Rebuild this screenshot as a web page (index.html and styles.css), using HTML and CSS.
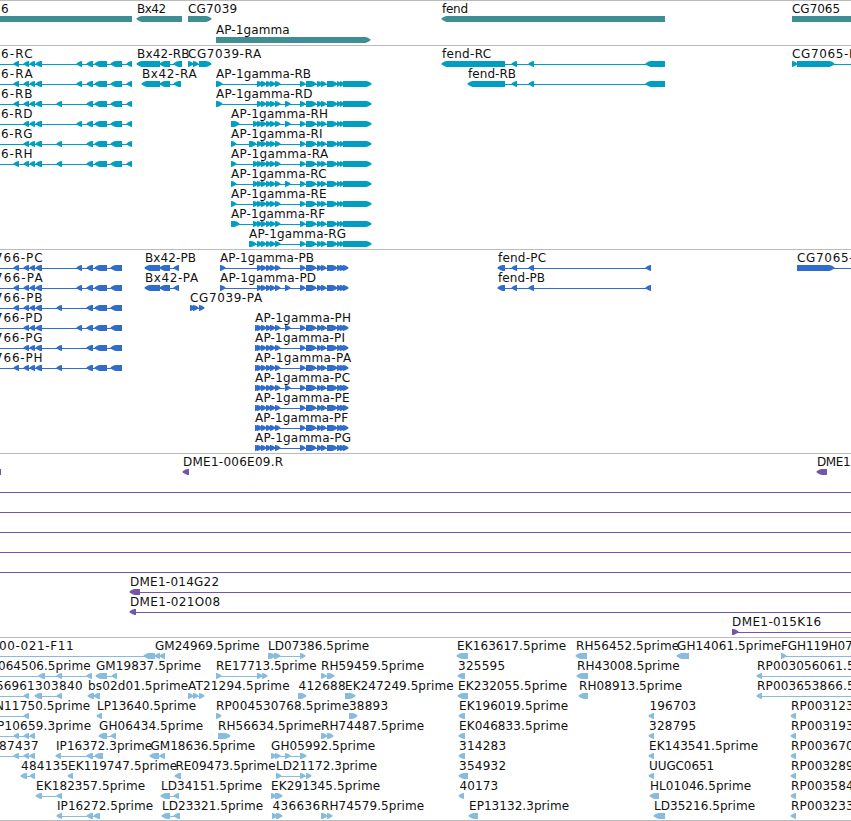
FILE: index.html
```
<!DOCTYPE html>
<html lang="en">

<head>
  <meta charset="UTF-8">
  <meta name="viewport" content="width=device-width, initial-scale=1.0">
  <title>Genome Browser</title>
  <link rel="stylesheet" href="styles.css">
</head>

<body>
  <main class="browser">
    <!-- Genes -->
    <section class="track genes"><svg id="genes"></svg></section>

    <!-- Transcripts -->
    <section class="track transcripts"><svg id="transcripts"></svg></section>

    <!-- Coding sequences -->
    <section class="track proteins"><svg id="proteins"></svg></section>

    <!-- Clones -->
    <section class="track clones"><svg id="clones"></svg></section>

    <!-- ESTs -->
    <section class="track ests"><svg id="ests"></svg></section>
  </main>

  <script src="script.js"></script>
</body>

</html>
```
FILE: styles.css
```
/* Reset and base styles */
body {
  margin: 0;
  background: #fff;
  color: #000;
  font-family: "DejaVu Sans", sans-serif;
  font-size: 12px;
  overflow: hidden;
}

.browser {
  display: flex;
  flex-direction: column;
  border-bottom: 1px solid #bbb;
}

/* Tracks */
.track {
  box-sizing: border-box;
  border-top: 1px solid #bbb;
}

.track svg {
  display: block;
  width: 100%;
  height: 100%;
  overflow: hidden;
}

.track text {
  fill: #111;
}

.genes {
  height: 45px;
  color: #408e95;
}

.transcripts {
  height: 204px;
  color: #009fc1;
}

.proteins {
  height: 204px;
  color: #306ccc;
}

.clones {
  height: 184px;
  color: #7356a8;
}

.ests {
  height: 183px;
  color: #87bcde;
}

/* Features */
.span,
.intron {
  fill: currentColor;
}

.intron {
  shape-rendering: crispEdges;
}
```
FILE: script.js
```
const SVG = 'http://www.w3.org/2000/svg';
const HEAD = 5;

function add(parent, tag, attrs) {
  const el = document.createElementNS(SVG, tag);
  for (const key in attrs) el.setAttribute(key, attrs[key]);
  parent.appendChild(el);
  return el;
}

// Block with a blunt arrow head on the side of the strand
function drawSpan(svg, y, from, to, strand) {
  const tip = (strand < 0 ? from : to) + strand * 0.4;
  const back = strand < 0 ? to : from;
  const neck = tip - strand * Math.min(HEAD, to - from);
  const mid = tip - strand * 3;
  const points = [[tip, y + 2.2], [mid, y + 0.6], [neck, y], [back, y],
    [back, y + 6], [neck, y + 6], [mid, y + 5.2], [tip, y + 3.6]];
  add(svg, 'polygon', { class: 'span', points: points.join(' ') });
}

// Feature: [row, strand, label, label start, label end, line start, line end, spans]
function drawTrack(id, features, pitch = 20) {
  const svg = document.getElementById(id);
  features.forEach(([row, strand, label, start, end, from, to, spans]) => {
    const y = row * pitch;
    if (to > from) add(svg, 'rect', { class: 'intron', x: from, y: y + 18, width: to - from, height: 1 });
    spans.forEach(([a, b]) => drawSpan(svg, y + 15, a, b, strand));
    if (label) {
      const text = add(svg, 'text', { x: start, y: y + 12, textLength: end - start + 0.6 });
      text.textContent = label;
    }
  });
}

// Exons shared by several transcripts
const LEFT = [[24, 29], [30, 35], [36, 42]];
const LEFT_END = [[87, 93], [95, 107], [111, 122]];
const BX = [[160, 170]];
const AP_FIVE = [[257, 262], [261, 266], [266, 271], [270, 275], [275, 280]];
const AP_MID = [[300, 305], [306, 316], [317, 322], [321, 326], [327, 337]];
const AP_RNA = [...AP_MID, [337, 341], [340, 344], [343, 371]];
const AP_CDS = [...AP_MID, [337, 342], [340, 345], [343, 348]];
const FEND = [[512, 517], [529, 534]];
const A = [14, 19], B = [57, 62], C = [77, 82], D = [285, 290];

drawTrack('genes', [
  [0, -1, '6', 1, 8, 0, 0, [[-10, 132]]],
  [0, -1, 'Bx42', 137, 165.5, 0, 0, [[137, 182]]],
  [0, 1, 'CG7039', 188, 236.5, 0, 0, [[188, 211]]],
  [1, 1, 'AP-1gamma', 216, 289, 0, 0, [[216, 370]]],
  [0, -1, 'fend', 442, 467.5, 0, 0, [[442, 665]]],
  [0, 1, 'CG7065', 792, 839.5, 0, 0, [[792, 870]]]
], 21);

const transcripts = [
  [0, -1, 'Bx42-RB', 137, 189, 137, 182, [[137, 160], ...BX, [174, 182]]],
  [1, -1, 'Bx42-RA', 142, 196, 142, 181, [[142, 160], ...BX, [174, 181]]],
  [0, 1, 'CG7039-RA', 188, 260.5, 188, 211, [[188, 193], [193, 198], [199, 211]]],
  [0, -1, 'fend-RC', 442, 490.5, 505, 665, [[442, 505], ...FEND, [646, 665]]],
  [1, -1, 'fend-RB', 468, 515.5, 505, 665, [[468, 505], ...FEND, [646, 665]]],
  [0, 1, 'CG7065-RA', 792, 865, 792, 851, [[792, 797], [797, 834]]]
];

[
  ['C', A, C], ['A', A, C], ['B', A, B], ['D', C], ['G', B], ['H', A, B]
].forEach(([name, ...extra], row) => {
  transcripts.push([row, -1, '6-R' + name, 1, 32, 0, 132, [...LEFT, ...extra, ...LEFT_END, [127, 132]]]);
});

[
  ['B', 216, 310.5, [216, 222]],
  ['D', 216, 312, [216, 222], D],
  ['H', 231, 327.5, [231, 239], [253, 258], D],
  ['I', 231, 322, [231, 236], [249, 256]],
  ['A', 231, 327.5, [231, 236], [253, 258]],
  ['C', 231, 326, [231, 236], [253, 258], D],
  ['E', 231, 326, [231, 236], [253, 258]],
  ['F', 231, 324.5, [231, 239], [253, 258]],
  ['G', 249, 345.5, [249, 256]]
].forEach(([name, x, end, ...extra], i) => {
  transcripts.push([i + 1, 1, 'AP-1gamma-R' + name, x, end, x, 371, [...extra, ...AP_FIVE, ...AP_RNA]]);
});

drawTrack('transcripts', transcripts);

const proteins = [
  [0, -1, 'Bx42-PB', 145, 195.5, 145, 179, [[145, 160], ...BX, [174, 179]]],
  [1, -1, 'Bx42-PA', 145, 197.5, 145, 179, [[145, 160], ...BX, [174, 179]]],
  [2, 1, 'CG7039-PA', 190, 261.5, 190, 204, [[190, 195], [193, 198], [199, 204]]],
  [0, -1, 'fend-PC', 498, 545.5, 498, 651, [[498, 505], ...FEND, [646, 651]]],
  [1, -1, 'fend-PB', 498, 544.5, 498, 651, [[498, 505], ...FEND, [646, 651]]],
  [0, 1, 'CG7065-PA', 797, 869, 797, 851, [[797, 834]]]
];

[
  ['C', A, C], ['A', A, C], ['B', A, B], ['D', C], ['G', B], ['H', A, B]
].forEach(([name, ...extra], row) => {
  proteins.push([row, -1, '766-P' + name, -5, 42, 0, 122, [...LEFT, ...extra, ...LEFT_END]]);
});

[
  [0, 'B', 220, 313.5, [220, 225]],
  [1, 'D', 220, 315.5, [220, 225], D],
  [3, 'H', 255, 350.5, [255, 260], D],
  [4, 'I', 255, 344.5, [255, 260]],
  [5, 'A', 255, 350.5, [255, 260]],
  [6, 'C', 255, 349.5, [255, 260], D],
  [7, 'E', 255, 349, [255, 260]],
  [8, 'F', 255, 347.5, [255, 260]],
  [9, 'G', 255, 350.5, [255, 260]]
].forEach(([row, name, x, end, ...extra]) => {
  proteins.push([row, 1, 'AP-1gamma-P' + name, x, end, x, 348, [...extra, ...AP_FIVE, ...AP_CDS]]);
});

drawTrack('proteins', proteins);

drawTrack('clones', [
  [0, -1, '', 0, 0, 0, 0, [[-8, 1]]],
  [0, -1, 'DME1-006E09.R', 183, 282.5, 0, 0, [[183, 189]]],
  [0, -1, 'DME1', 817, 850, 0, 0, [[817, 827]]],
  [1, 1, '', 0, 0, 0, 851, []],
  [2, 1, '', 0, 0, 0, 851, []],
  [3, 1, '', 0, 0, 0, 851, []],
  [4, 1, '', 0, 0, 0, 851, []],
  [5, 1, '', 0, 0, 0, 851, []],
  [6, -1, 'DME1-014G22', 130, 218.5, 130, 851, [[130, 140]]],
  [7, -1, 'DME1-021O08', 130, 219.5, 130, 851, [[130, 136]]],
  [8, 1, 'DME1-015K16', 732, 820.5, 732, 851, [[732, 738]]]
]);

drawTrack('ests', [
  [0, -1, '00-021-F11', -1, 73, 0, 165, [[144, 155], [155, 160], [160, 165]]],
  [0, -1, 'GM24969.5prime', 155, 259, 155, 165, []],
  [0, 1, 'LD07386.5prime', 268, 368.5, 268, 305, [[268, 275], [274, 280], [300, 305]]],
  [0, -1, 'EK163617.5prime', 457, 565.5, 0, 0, [[457, 468]]],
  [0, -1, 'RH56452.5prime', 576, 678.5, 0, 0, [[576, 587]]],
  [0, -1, 'GH14061.5prime', 677, 780.5, 0, 0, [[677, 689]]],
  [0, 1, 'FGH119H07', 781, 852, 781, 851, [[781, 786]]],

  [1, -1, '064506.5prime', -2, 90, 0, 92, [[39, 45], [57, 62], [87, 92]]],
  [1, -1, 'GM19837.5prime', 96, 200.5, 96, 117, [[96, 107], [112, 117]]],
  [1, 1, 'RE17713.5prime', 216, 316, 216, 267, [[216, 221], [257, 262], [262, 267]]],
  [1, 1, 'RH59459.5prime', 321, 423.5, 321, 334, [[321, 326], [327, 334]]],
  [1, -1, '325595', 458, 504.5, 0, 0, [[458, 465]]],
  [1, -1, 'RH43008.5prime', 577, 679, 0, 0, [[577, 588]]],
  [1, -1, 'RP003056061.5', 757, 854, 757, 851, [[757, 762]]],

  [2, -1, '56961', -4, 34, 0, 29, [[24, 29]]],
  [2, -1, '303840', 35, 82, 35, 62, [[35, 42], [57, 62]]],
  [2, -1, 'bs02d01.5prime', 88, 187.5, 88, 100, [[88, 94], [94, 100]]],
  [2, 1, 'AT21294.5prime', 188, 289, 188, 204, [[188, 193], [193, 198], [199, 204]]],
  [2, 1, '412688', 298.5, 345, 0, 0, [[298, 306]]],
  [2, 1, 'EK247249.5prime', 345, 453, 0, 0, [[345, 355]]],
  [2, -1, 'EK232055.5prime', 458, 566.5, 0, 0, [[458, 468]]],
  [2, -1, 'RH08913.5prime', 579, 681.5, 0, 0, [[579, 588]]],
  [2, -1, 'RP003653866.5', 757, 854, 757, 851, [[757, 762]]],

  [3, -1, 'N11750.5prime', -5, 89.5, 0, 29, [[24, 29]]],
  [3, -1, 'LP13640.5prime', 97, 195.5, 0, 0, [[97, 102]]],
  [3, 1, 'RP004530768.5prime', 216, 348.5, 0, 0, [[216, 221]]],
  [3, 1, '38893', 349, 387.5, 0, 0, [[349, 357]]],
  [3, -1, 'EK196019.5prime', 459, 567.5, 0, 0, [[459, 465]]],
  [3, -1, '196703', 649.5, 695.5, 0, 0, [[649, 654]]],
  [3, -1, 'RP003123', 791, 853, 0, 0, [[791, 796]]],

  [4, -1, 'P10659.3prime', -3, 90.5, 0, 35, [[14, 19], [24, 29], [30, 35]]],
  [4, -1, 'GH06434.5prime', 99, 202.5, 99, 116, [[99, 107], [111, 116]]],
  [4, 1, 'RH56634.5prime', 218, 320.5, 0, 0, [[218, 230]]],
  [4, 1, 'RH74487.5prime', 321, 423.5, 321, 333, [[321, 327], [327, 333]]],
  [4, -1, 'EK046833.5prime', 459, 567.5, 0, 0, [[459, 465]]],
  [4, -1, '328795', 649, 695.5, 0, 0, [[649, 654]]],
  [4, -1, 'RP003193', 791, 853, 0, 0, [[791, 796]]],

  [5, -1, '87437', -1, 38, 0, 35, [[14, 19], [24, 29], [30, 35]]],
  [5, -1, 'IP16372.3prime', 56, 151.5, 56, 103, [[56, 61], [87, 93], [95, 103]]],
  [5, -1, 'GM18636.5prime', 150.5, 254.5, 150, 165, [[150, 159], [160, 165]]],
  [5, 1, 'GH05992.5prime', 271, 374.5, 271, 306, [[271, 276], [275, 280], [285, 290], [300, 306]]],
  [5, -1, '314283', 459, 505.5, 0, 0, [[459, 465]]],
  [5, -1, 'EK143541.5prime', 649, 757.5, 0, 0, [[649, 654]]],
  [5, -1, 'RP003670', 791, 853, 0, 0, [[791, 796]]],

  [6, -1, '484135', 21, 67.5, 21, 35, [[21, 27], [30, 35]]],
  [6, -1, 'EK119747.5prime', 68, 176.5, 0, 0, [[68, 73]]],
  [6, -1, 'RE09473.5prime', 175.5, 275, 0, 0, [[175, 181]]],
  [6, 1, 'LD21172.3prime', 276, 376.5, 276, 311, [[276, 281], [300, 305], [306, 311]]],
  [6, -1, '354932', 459, 505.5, 0, 0, [[459, 468]]],
  [6, -1, 'UUGC0651', 649, 713.5, 0, 0, [[649, 654]]],
  [6, -1, 'RP003289', 791, 853, 0, 0, [[791, 796]]],

  [7, -1, 'EK182357.5prime', 36, 144.5, 36, 62, [[36, 42], [57, 62]]],
  [7, -1, 'LD34151.5prime', 161, 261.5, 161, 179, [[161, 170], [174, 179]]],
  [7, 1, 'EK291345.5prime', 271, 379.5, 271, 282, [[271, 276], [275, 282]]],
  [7, -1, '40173', 459.5, 497.5, 0, 0, [[459, 464]]],
  [7, -1, 'HL01046.5prime', 650, 750.5, 0, 0, [[650, 659]]],
  [7, -1, 'RP003584', 791, 853, 0, 0, [[791, 796]]],

  [8, -1, 'IP16272.5prime', 57, 152.5, 57, 100, [[57, 62], [87, 93], [94, 100]]],
  [8, -1, 'LD23321.5prime', 162, 262.5, 162, 180, [[162, 170], [174, 180]]],
  [8, 1, '436636', 272.5, 319.5, 272, 282, [[272, 277], [276, 282]]],
  [8, 1, 'RH74579.5prime', 321, 423.5, 321, 332, [[321, 327], [327, 332]]],
  [8, -1, 'EP13132.3prime', 469, 568.5, 0, 0, [[469, 478]]],
  [8, -1, 'LD35216.5prime', 654, 754.5, 0, 0, [[654, 665]]],
  [8, -1, 'RP003233', 791, 853, 0, 0, [[791, 796]]]
]);
```
